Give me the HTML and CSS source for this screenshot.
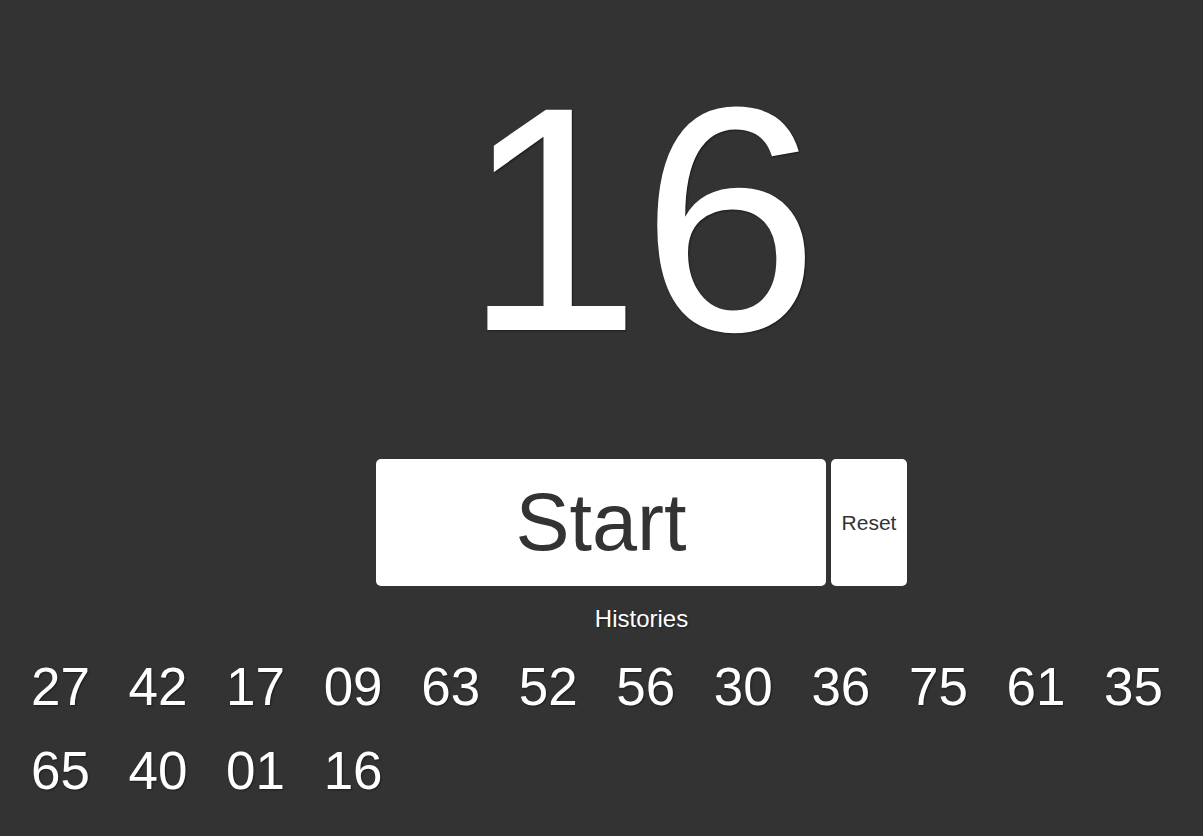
FILE: index.html
```html
<!DOCTYPE html>
<html>
<head>
<meta charset="utf-8">
<link rel="stylesheet" href="styles.css">
</head>
<body>
  <div class="number">16</div>
  <div class="controls">
    <button class="btn start">Start</button>
    <button class="btn reset">Reset</button>
  </div>
  <div class="title">Histories</div>
  <div class="histories">
    <span>27</span><span>42</span><span>17</span><span>09</span><span>63</span><span>52</span>
    <span>56</span><span>30</span><span>36</span><span>75</span><span>61</span><span>35</span>
    <span>65</span><span>40</span><span>01</span><span>16</span>
  </div>
</body>
</html>
```
FILE: styles.css
```css
html, body {
  margin: 0;
  padding: 0;
  background: #333333;
  height: 100%;
  overflow: hidden;
}
body {
  font-family: "Liberation Sans", Arial, sans-serif;
  color: #ffffff;
}
.number {
  margin-top: 28px;
  padding-left: 79px;
  text-align: center;
  font-size: 320px;
  line-height: 383px;
  height: 383px;
  text-shadow: 1px 1px 2px rgba(0, 0, 0, 0.45);
}
.controls {
  margin-top: 48px;
  display: flex;
  justify-content: flex-start;
  gap: 5px;
  padding-left: 376px;
}
.btn {
  border: none;
  background: #ffffff;
  color: #333333;
  border-radius: 5px;
  font-family: "Liberation Sans", Arial, sans-serif;
  height: 127px;
  padding: 0;
  display: flex;
  align-items: center;
  justify-content: center;
}
.start {
  width: 450px;
  font-size: 81px;
}
.reset {
  width: 76px;
  font-size: 21px;
}
.title {
  margin-top: 19px;
  padding-left: 80px;
  text-align: center;
  font-size: 24px;
  text-shadow: 1px 1px 2px rgba(0, 0, 0, 0.45);
}
.histories {
  margin-top: 12px;
  padding-left: 31px;
  display: grid;
  grid-template-columns: repeat(12, 97.55px);
  grid-auto-rows: 84px;
  font-size: 53px;
  line-height: 84px;
  text-shadow: 1px 1px 2px rgba(0, 0, 0, 0.45);
}
```
